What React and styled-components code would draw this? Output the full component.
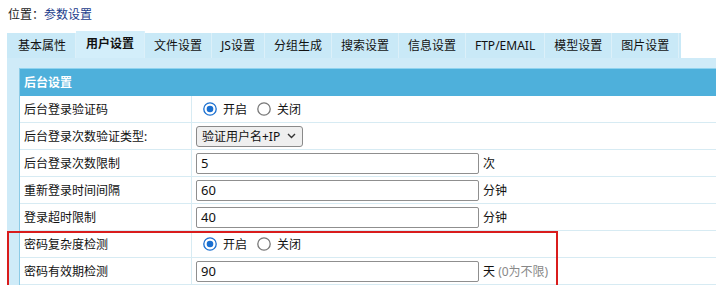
import styled, { createGlobalStyle } from "styled-components"

const GlobalStyle = createGlobalStyle`
  html, body { margin: 0; padding: 0; background: #fff; }
  body {
    font-family: "Noto Sans", "Noto Sans CJK SC", sans-serif;
    font-size: 12px;
    color: #222;
    overflow: hidden;
  }
`

const tabs = ["基本属性", "用户设置", "文件设置", "JS设置", "分组生成", "搜索设置", "信息设置", "FTP/EMAIL", "模型设置", "图片设置"]

const rows = [
  { label: "后台登录验证码", kind: "radio", on: true },
  { label: "后台登录次数验证类型:", kind: "select", value: "验证用户名+IP" },
  { label: "后台登录次数限制", kind: "input", value: "5", unit: "次" },
  { label: "重新登录时间间隔", kind: "input", value: "60", unit: "分钟" },
  { label: "登录超时限制", kind: "input", value: "40", unit: "分钟" },
  { label: "密码复杂度检测", kind: "radio", on: true },
  { label: "密码有效期检测", kind: "input", value: "90", unit: "天", note: "(0为不限)" },
]

const Radio = ({ checked }) => (
  <svg width="14" height="14" viewBox="0 0 14 14">
    <circle cx="7" cy="7" r="6.2" fill="#fff" stroke={checked ? "#1a6fd0" : "#777"} strokeWidth="1.3" />
    {checked && <circle cx="7" cy="7" r="3.3" fill="#1a6fd0" />}
  </svg>
)

const Chevron = () => (
  <svg width="9" height="6" viewBox="0 0 9 6">
    <path d="M1 1l3.5 3.5L8 1" fill="none" stroke="#333" strokeWidth="1.4" />
  </svg>
)

const App = () => {
  return (
    <Page>
      <GlobalStyle />
      <Crumb>
        位置：<CrumbLink>参数设置</CrumbLink>
      </Crumb>
      <TabBar>
        {tabs.map((t) => (
          <Tab key={t} active={t === "用户设置"}>{t}</Tab>
        ))}
      </TabBar>
      <Panel>
        <Box>
          <Header>后台设置</Header>
          {rows.map((r) => (
            <Row key={r.label}>
              <Label>{r.label}</Label>
              <Value>
                {r.kind === "radio" && (
                  <>
                    <Choice><Radio checked={r.on} />开启</Choice>
                    <Choice><Radio checked={!r.on} />关闭</Choice>
                  </>
                )}
                {r.kind === "select" && (
                  <Select>
                    {r.value}
                    <Chevron />
                  </Select>
                )}
                {r.kind === "input" && (
                  <>
                    <Input>{r.value}</Input>
                    <Unit>
                      {r.unit}
                      {r.note && <Note> {r.note}</Note>}
                    </Unit>
                  </>
                )}
              </Value>
            </Row>
          ))}
        </Box>
        <Mark />
      </Panel>
    </Page>
  )
}

export default App

const Page = styled.div`
  padding-left: 7px;
  width: 709px;
  height: 285px;
  overflow: hidden;
`
const Crumb = styled.div`
  height: 31px;
  line-height: 30px;
  padding-left: 1px;
  color: #222;
`
const CrumbLink = styled.span`
  color: #1b3c8c;
`
const TabBar = styled.div`
  display: flex;
  align-items: flex-end;
  width: 674px;
  height: 27px;
  padding-left: 2px;
  box-sizing: border-box;
  background: linear-gradient(#fff 0 2px, #c9e9f7 2px);
`
const Tab = styled.div`
  height: ${(p) => (p.active ? "27px" : "25px")};
  line-height: 25px;
  padding: 0 ${(p) => (p.active ? "10px" : "9px")};
  font-weight: ${(p) => (p.active ? "bold" : "normal")};
  color: #111;
  background: ${(p) => (p.active ? "#d3eefa" : "transparent")};
  border-right: 1px solid #dcf0f9;
  white-space: nowrap;
`
const Panel = styled.div`
  position: relative;
  background: #cfebf8;
  padding: 10px 0 0 12px;
`
const Box = styled.div`
  background: #fff;
  border-left: 1px solid #8ccbe6;
  border-top: 1px solid #8fd3ef;
`
const Header = styled.div`
  height: 27px;
  line-height: 27px;
  padding-left: 4px;
  background: #4eb0db;
  color: #fff;
  font-weight: bold;
`
const Row = styled.div`
  display: grid;
  grid-template-columns: 172px 1fr;
  height: 27px;
  border-bottom: 1px solid #d7ebf3;
  box-sizing: border-box;
`
const Label = styled.div`
  display: flex;
  align-items: center;
  padding-left: 4px;
  border-right: 1px solid #d7ebf3;
  color: #111;
`
const Value = styled.div`
  display: flex;
  align-items: center;
  padding-left: 4px;
  color: #111;
`
const Choice = styled.label`
  display: inline-flex;
  align-items: center;
  gap: 6px;
  margin: 0 10px 0 7px;
  & + & { margin-left: 0; }
`
const Select = styled.div`
  display: flex;
  align-items: center;
  gap: 7px;
  height: 21px;
  box-sizing: border-box;
  padding: 0 6px 0 5px;
  border: 1px solid #8a8a8a;
  border-radius: 3px;
  background: #efefef;
  color: #111;
  white-space: nowrap;
`
const Input = styled.div`
  width: 283px;
  height: 21px;
  box-sizing: border-box;
  line-height: 19px;
  padding-left: 4px;
  border: 1px solid #8f8f8f;
  border-radius: 2px;
  color: #111;
  font-size: 13px;
`
const Unit = styled.span`
  margin-left: 4px;
  color: #111;
  white-space: nowrap;
`
const Note = styled.span`
  color: #888;
`
const Mark = styled.div`
  position: absolute;
  left: 0;
  top: 173px;
  width: 551px;
  height: 60px;
  box-sizing: border-box;
  border: 2px solid #d91c1c;
`
